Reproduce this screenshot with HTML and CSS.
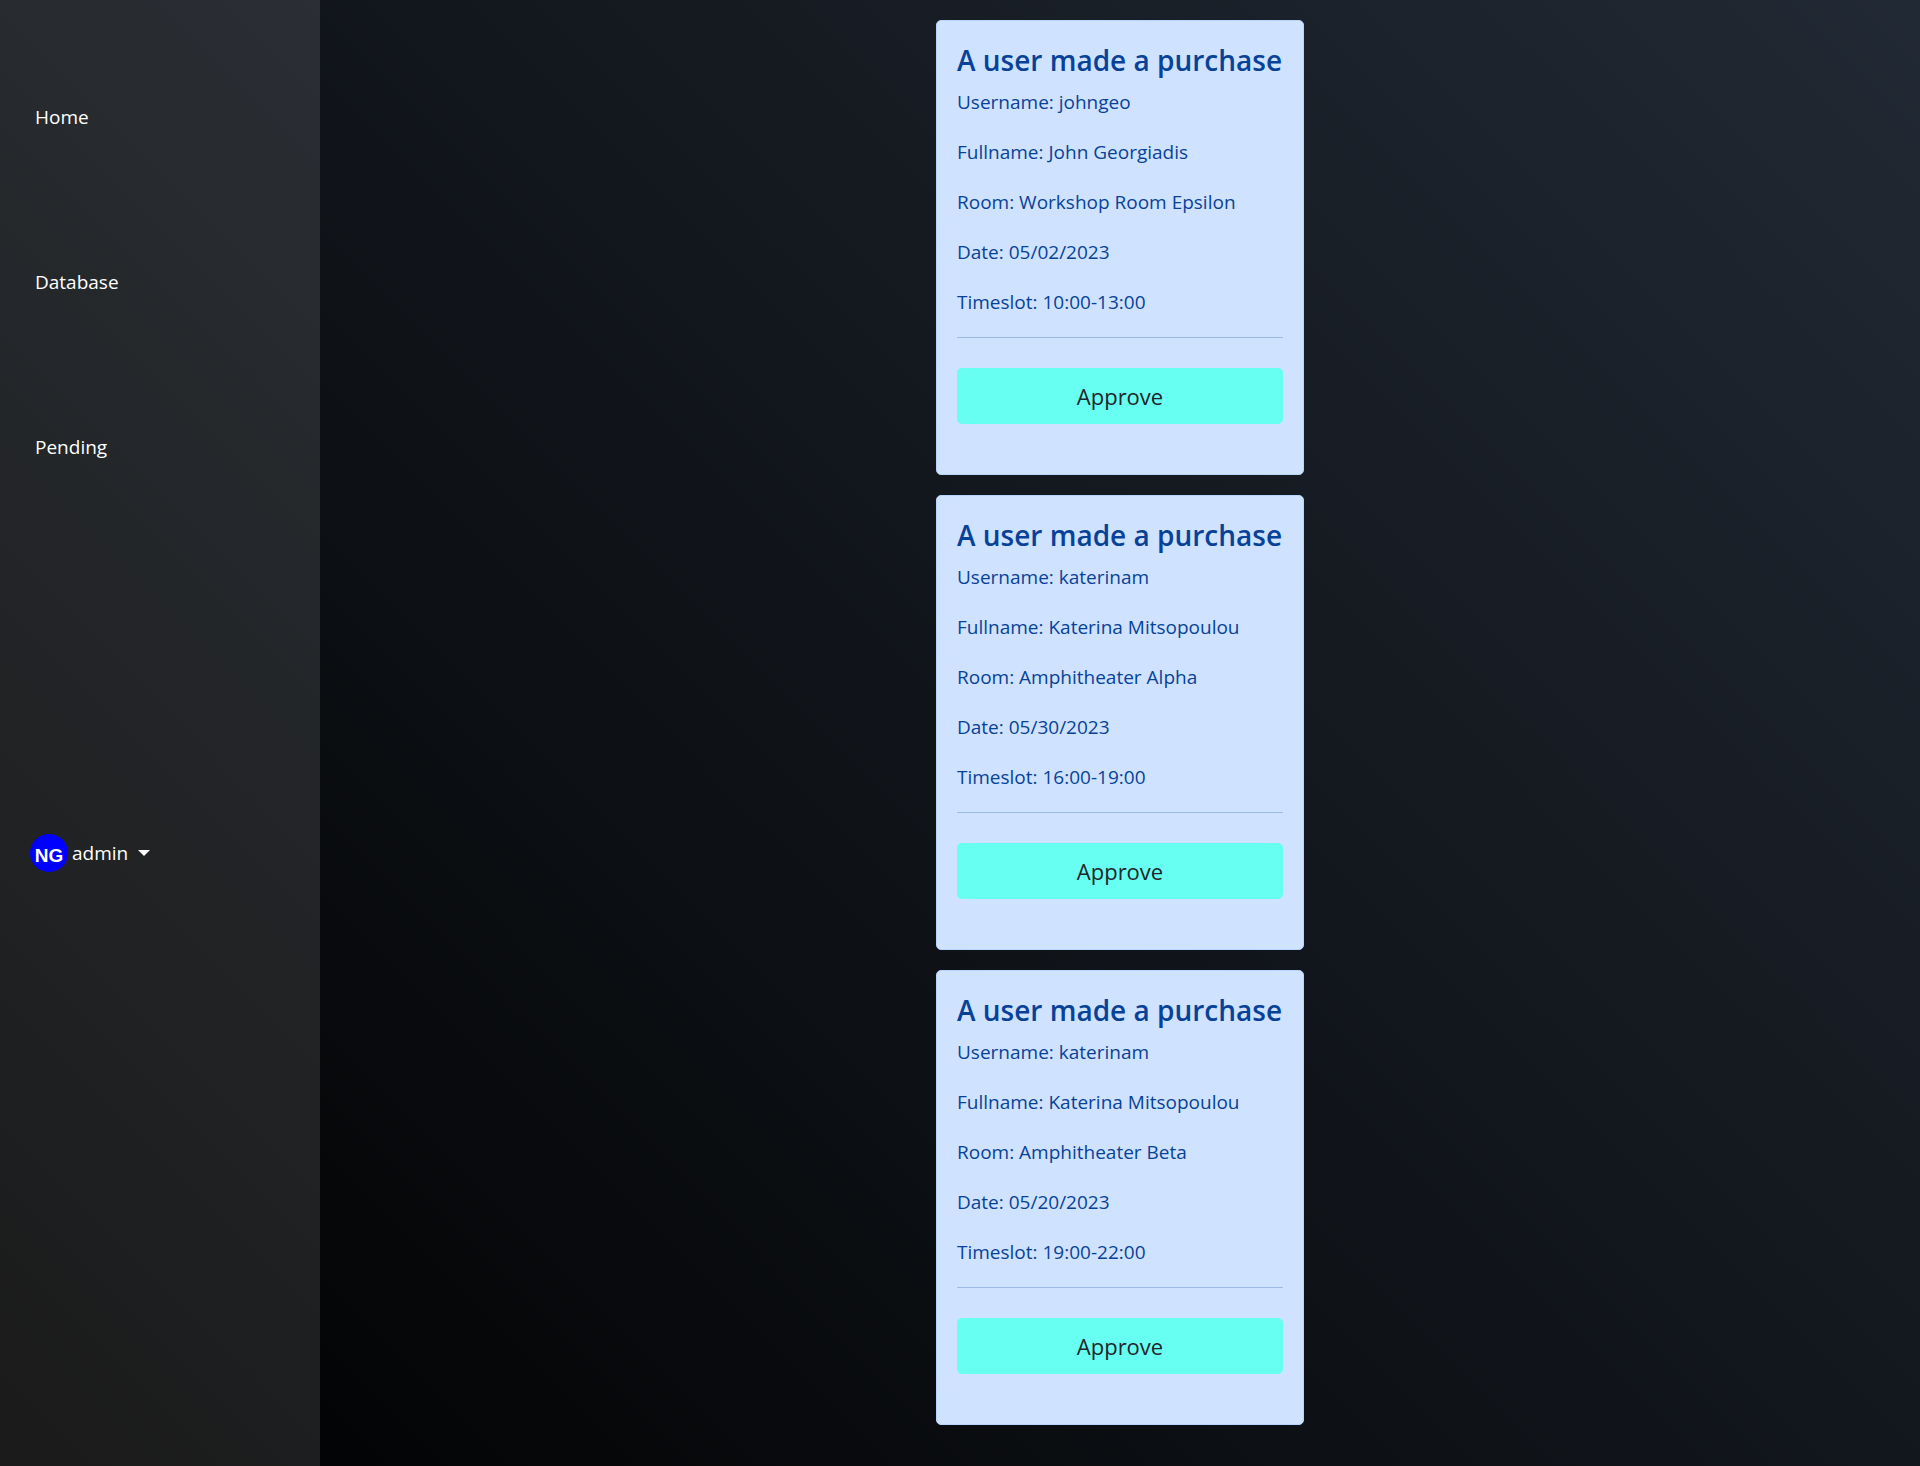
FILE: index.html
```html
<!DOCTYPE html>
<html lang="en">
<head>
<meta charset="utf-8">
<meta name="viewport" content="width=device-width, initial-scale=1">
<title>Pending</title>
<link rel="stylesheet" href="styles.css">
</head>
<body>
<div class="layout">
  <aside class="sidebar">
    <nav class="menu">
      <a class="menu-link" href="#home">Home</a>
      <a class="menu-link" href="#database">Database</a>
      <a class="menu-link" href="#pending">Pending</a>
    </nav>
    <button class="account" type="button">
      <svg class="avatar" viewBox="0 0 38 38" aria-hidden="true">
        <circle cx="19" cy="19" r="19" fill="#00f"/>
        <text class="initials" x="19" y="28" text-anchor="middle">NG</text>
      </svg>
      <span>admin</span>
      <span class="caret"></span>
    </button>
  </aside>
  <main class="content">
    <article class="card">
      <h2 class="card-title">A user made a purchase</h2>
      <p>Username: johngeo</p>
      <p>Fullname: John Georgiadis</p>
      <p>Room: Workshop Room Epsilon</p>
      <p>Date: 05/02/2023</p>
      <p>Timeslot: 10:00-13:00</p>
      <hr class="rule">
      <button class="approve" type="button">Approve</button>
    </article>
    <article class="card">
      <h2 class="card-title">A user made a purchase</h2>
      <p>Username: katerinam</p>
      <p>Fullname: Katerina Mitsopoulou</p>
      <p>Room: Amphitheater Alpha</p>
      <p>Date: 05/30/2023</p>
      <p>Timeslot: 16:00-19:00</p>
      <hr class="rule">
      <button class="approve" type="button">Approve</button>
    </article>
    <article class="card">
      <h2 class="card-title">A user made a purchase</h2>
      <p>Username: katerinam</p>
      <p>Fullname: Katerina Mitsopoulou</p>
      <p>Room: Amphitheater Beta</p>
      <p>Date: 05/20/2023</p>
      <p>Timeslot: 19:00-22:00</p>
      <hr class="rule">
      <button class="approve" type="button">Approve</button>
    </article>
  </main>
</div>
</body>
</html>
```
FILE: styles.css
```css
* {
  box-sizing: border-box;
}

body {
  margin: 0;
  font-family: "Segoe UI", "Open Sans", "Noto Sans", sans-serif;
  font-size: 19px;
  line-height: 30px;
  color: #fff;
  background: #000;
}

.layout {
  display: grid;
  grid-template-columns: 1fr 5fr;
  min-height: 100vh;
  background: linear-gradient(45deg, #000, #212934);
}

.sidebar {
  display: flex;
  flex-direction: column;
  align-items: flex-start;
  padding: 42px 20px;
  background: rgba(248, 249, 250, 0.11);
}

.menu {
  display: flex;
  flex-direction: column;
  width: 100%;
}

.menu-link {
  margin: 50px 0 65px;
  padding: 0 15px;
  line-height: 50px;
  color: #fff;
  text-decoration: none;
}

.account {
  display: flex;
  align-items: center;
  gap: 4px;
  margin-top: 297px;
  padding: 0 10px;
  border: 0;
  font: inherit;
  color: #fff;
  background: none;
}

.avatar {
  width: 38px;
  height: 38px;
}

.initials {
  font: bold 19px "Liberation Sans", Arial, sans-serif;
  fill: #fff;
}

.caret {
  margin-left: 6px;
  border-top: 6px solid;
  border-right: 6px solid transparent;
  border-left: 6px solid transparent;
}

.content {
  display: flex;
  flex-direction: column;
  align-items: center;
  gap: 20px;
  padding: 20px;
}

.card {
  display: flex;
  flex-direction: column;
  width: 100%;
  max-width: 368px;
  padding: 20px 20px 50px;
  border: 1px solid #b6d4fe;
  border-radius: 5px;
  color: #084298;
  background: #cfe2ff;
}

.card-title {
  margin: 0 0 8px;
  font-size: 28px;
  font-weight: 600;
  line-height: 38px;
  white-space: nowrap;
}

.card p {
  margin: 0 0 20px;
}

.rule {
  width: 100%;
  margin: 0 0 30px;
  border: 0;
  border-top: 1px solid #9db9e5;
}

.approve {
  padding: 10px 20px;
  border: 0;
  border-radius: 5px;
  font: inherit;
  font-size: 22px;
  line-height: 36px;
  color: #212529;
  background: #66fff2;
}
```
